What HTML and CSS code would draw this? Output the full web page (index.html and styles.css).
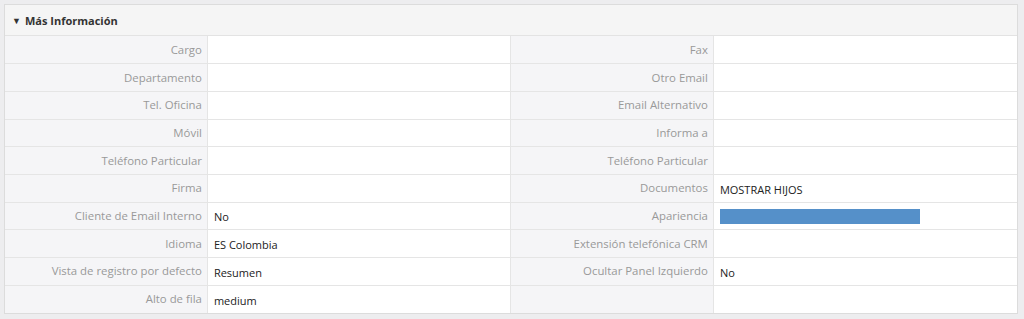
FILE: index.html
```html
<!DOCTYPE html>
<html lang="es">
  <head>
    <meta charset="UTF-8">
    <title>Más Información</title>
    <link rel="stylesheet" href="styles.css">
  </head>
  <body>
    <div class="panel">
      <div class="panel-heading">
        <span class="caret">&#9660;</span> Más Información
      </div>
      <table class="detail">
        <tbody>
          <tr>
            <td class="label">Cargo</td><td class="value"></td>
            <td class="label">Fax</td><td class="value"></td>
          </tr>
          <tr>
            <td class="label">Departamento</td><td class="value"></td>
            <td class="label">Otro Email</td><td class="value"></td>
          </tr>
          <tr>
            <td class="label">Tel. Oficina</td><td class="value"></td>
            <td class="label">Email Alternativo</td><td class="value"></td>
          </tr>
          <tr>
            <td class="label">Móvil</td><td class="value"></td>
            <td class="label">Informa a</td><td class="value"></td>
          </tr>
          <tr>
            <td class="label">Teléfono Particular</td><td class="value"></td>
            <td class="label">Teléfono Particular</td><td class="value"></td>
          </tr>
          <tr>
            <td class="label">Firma</td><td class="value"></td>
            <td class="label">Documentos</td><td class="value">MOSTRAR HIJOS</td>
          </tr>
          <tr>
            <td class="label">Cliente de Email Interno</td><td class="value">No</td>
            <td class="label">Apariencia</td><td class="value"><div class="swatch"></div></td>
          </tr>
          <tr>
            <td class="label">Idioma</td><td class="value">ES Colombia</td>
            <td class="label">Extensión telefónica CRM</td><td class="value"></td>
          </tr>
          <tr>
            <td class="label">Vista de registro por defecto</td><td class="value">Resumen</td>
            <td class="label">Ocultar Panel Izquierdo</td><td class="value">No</td>
          </tr>
          <tr>
            <td class="label">Alto de fila</td><td class="value">medium</td>
            <td class="label"></td><td class="value"></td>
          </tr>
        </tbody>
      </table>
    </div>
  </body>
</html>
```

FILE: styles.css
```css
* {
  box-sizing: border-box;
}

body {
  margin: 0;
  padding: 4px 6px 0 4px;
  background: #ededef;
  font-family: 'Open Sans', 'Noto Sans', sans-serif;
  color: #333;
}

.panel {
  background: #fff;
  border: 1px solid #dcdcdc;
}

.panel-heading {
  height: 31px;
  padding: 0 7px;
  display: flex;
  align-items: center;
  gap: 4px;
  background: #f5f5f5;
  border-bottom: 1px solid #e3e3e3;
  font-size: 11px;
  font-weight: 700;
  color: #333;
}

.caret {
  font-size: 9px;
}

.detail {
  width: 100%;
  border-collapse: collapse;
  table-layout: fixed;
}

.detail tr {
  height: 27.7px;
}

.detail td {
  border-top: 1px solid #e5e5e5;
  padding: 0 6px;
  font-size: 11px;
  vertical-align: middle;
}

.detail tr:first-child td {
  border-top: none;
}

.detail td.label {
  width: 20%;
  background: #f5f5f7;
  color: #999;
  text-align: right;
  font-size: 11.4px;
  padding-right: 5px;
  padding-bottom: 1px;
  border-right: 1px solid #e5e5e5;
}

.detail td.value {
  width: 30%;
  color: #222;
  padding-top: 2px;
}

.detail td.value:nth-child(2) {
  border-right: 1px solid #e5e5e5;
}

.swatch {
  width: 200px;
  height: 15px;
  background: #5590c9;
}
```
